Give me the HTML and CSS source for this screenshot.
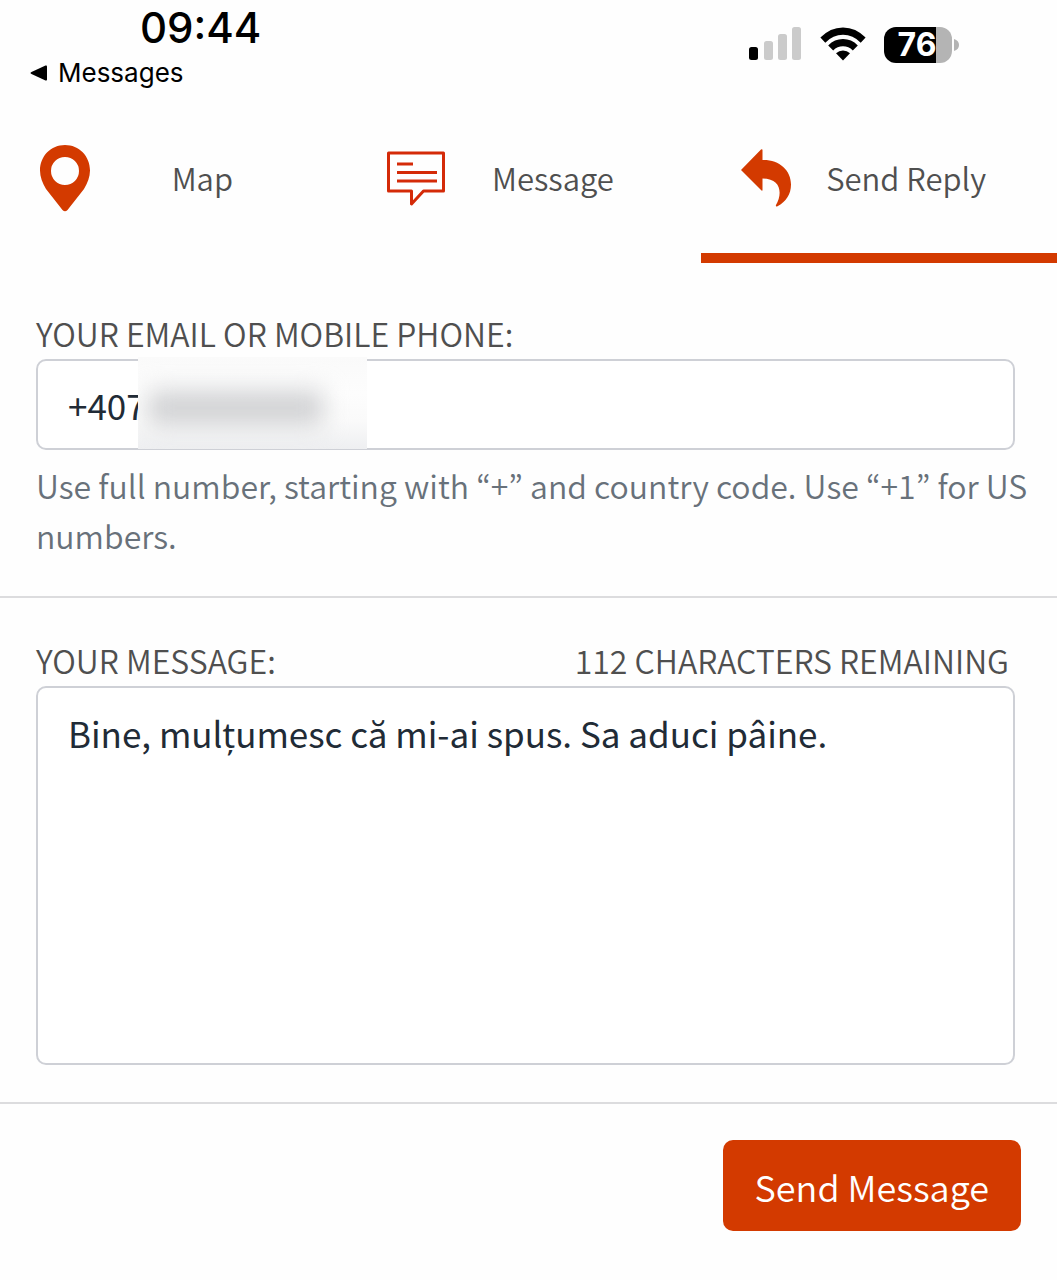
FILE: index.html
```html
<!DOCTYPE html>
<html lang="en">
<head>
  <meta charset="UTF-8" />
  <meta name="viewport" content="width=device-width, initial-scale=1.0" />
  <title>Send Reply</title>
  <link rel="stylesheet" href="styles.css">
</head>
<body>
  <header class="status-bar">
    <div class="status-left">
      <time class="clock">09:44</time>
      <a class="back-link" href="#">
        <svg width="18" height="16" viewBox="0 0 18 16" aria-hidden="true"><path d="M1.500 7 15.500.6Q17 0 17 1.500v13Q17 16 15.500 15.400L1.500 9Q-.5 8 1.500 7z" fill="#000"/></svg>
        Messages
      </a>
    </div>
    <div class="status-right">
      <svg width="53" height="34" viewBox="0 0 53 34" aria-label="Signal">
        <rect x="0" y="20" width="9" height="13" rx="2.500" fill="#000"/>
        <rect x="15" y="14" width="9" height="19" rx="2.500" fill="#cbcbcb"/>
        <rect x="29" y="7" width="9" height="26" rx="2.500" fill="#cbcbcb"/>
        <rect x="43" y="0" width="9" height="33" rx="2.500" fill="#cbcbcb"/>
      </svg>
      <svg width="46" height="34" viewBox="0 0 46 34" aria-label="Wi-Fi">
        <path d="M.4 10.600Q10 .4 23 .4t22.600 10.200L40.700 15.700Q33 7.800 23 7.800T5.300 15.700z"/>
        <path d="M8.200 18.400Q14.500 12 23 12t14.800 6.400L32.800 23.500Q28.700 19.300 23 19.300T13.200 23.500z"/>
        <path d="M16 26.300Q19 23.400 23 23.400t7 2.900L23 33.600z"/>
      </svg>
      <div class="battery">
        <span class="battery-level">76</span>
        <svg class="battery-tip" width="5" height="12" viewBox="0 0 5 12" aria-hidden="true"><path d="M0 0Q5 1.500 5 6T0 12z" fill="#b4b4b4"/></svg>
      </div>
    </div>
  </header>

  <nav class="tabs">
    <a class="tab" href="#map">
      <span class="tab-icon">
        <svg width="52" height="68" viewBox="0 0 52 68" aria-hidden="true">
          <path fill="#d33a00" fill-rule="evenodd" d="M26 1C12 1 1 12 1 26.500 1 33 3.500 39 7 45L23.500 66Q26 68.500 28.500 66L45 45C48.500 39 51 33 51 26.500 51 12 40 1 26 1zM26 13a14 14 0 1 1 0 28 14 14 0 1 1 0-28z"/>
        </svg>
      </span>
      <span class="tab-label">Map</span>
    </a>
    <a class="tab" href="#message">
      <span class="tab-icon">
        <svg width="58" height="56" viewBox="0 0 58 56" aria-hidden="true">
          <g fill="none" stroke="#d42a08" stroke-width="3">
            <path stroke-linejoin="round" d="M1.500 3H56.500V41H36.500L24.500 54V41H1.500z"/>
            <path d="M10 14H26M10 22.500H50M10 31H50"/>
          </g>
        </svg>
      </span>
      <span class="tab-label">Message</span>
    </a>
    <a class="tab active" href="#reply" aria-current="page">
      <span class="tab-icon">
        <svg width="52" height="58" viewBox="0 0 52 58" aria-hidden="true">
          <path fill="#d33a00" d="M1 21 21 .5Q22.500 0 22.500 1V11C39 10.500 51 21 51 35.500 51 45.500 46 52.500 37.500 57.300Q35.300 58 36 56C42.500 45 41.500 29.500 22.500 29.500V41Q22.500 42 21.500 41.500z"/>
        </svg>
      </span>
      <span class="tab-label">Send Reply</span>
    </a>
  </nav>

  <form class="reply-form">
    <section class="field">
      <label for="contact">YOUR EMAIL OR MOBILE PHONE:</label>
      <div class="input-wrap">
        <input type="text" id="contact" value="+407" />
        <span class="redacted"></span>
      </div>
      <p class="hint">Use full number, starting with “+” and country code. Use “+1” for US numbers.</p>
    </section>

    <section class="field message-field">
      <div class="label-row">
        <label for="message">YOUR MESSAGE:</label>
        <span>112 CHARACTERS REMAINING</span>
      </div>
      <textarea id="message">Bine, mulțumesc că mi-ai spus. Sa aduci pâine.</textarea>
    </section>

    <div class="actions">
      <button type="button">Send Message</button>
    </div>
  </form>
</body>
</html>
```

FILE: styles.css
```css
* {
  box-sizing: border-box;
}
body {
  margin: 0;
  background: #fefefe;
  color: #4f4f4f;
  font-family: "Noto Sans CJK KR", "Noto Sans", sans-serif;
  font-weight: 350;
}
a {
  color: inherit;
  text-decoration: none;
}

/* Status bar */
.status-bar {
  display: flex;
  justify-content: space-between;
  height: 110px;
  padding: 4px 98px 0 30px;
  color: #000;
  font-family: Inter, sans-serif;
}
.clock {
  display: block;
  padding-left: 110px;
  font-size: 42px;
  font-weight: 500;
  line-height: 48px;
}
.back-link {
  display: flex;
  align-items: center;
  gap: 10px;
  font-size: 26px;
  font-weight: 400;
  line-height: 42px;
}
.status-right {
  display: flex;
  align-items: flex-start;
  gap: 18px;
  padding-top: 23px;
}
.battery {
  display: flex;
  align-items: center;
  gap: 2px;
}
.battery-level {
  width: 68px;
  height: 36px;
  padding-right: 2px;
  border-radius: 12px;
  background: linear-gradient(to right, #000 52px, #b4b4b4 52px);
  color: #fff;
  font-size: 32px;
  font-weight: 700;
  line-height: 36px;
  text-align: center;
}

/* Tabs */
.tabs {
  display: grid;
  grid-template-columns: 70fr 70fr 71fr;
}
.tab {
  display: flex;
  align-items: center;
  height: 153px;
  padding: 0 40px 8px 36px;
  border-bottom: 10px solid transparent;
}
.tab.active {
  border-bottom-color: #d33a00;
}
.tab-icon {
  display: flex;
  justify-content: center;
  width: 58px;
}
.tab-label {
  flex: 1;
  font-size: 31px;
  line-height: 48px;
  text-align: center;
  white-space: nowrap;
}

/* Form */
.field {
  padding: 46px 0 36px 36px;
  border-bottom: 2px solid #dcdcde;
  font-size: 32px;
  line-height: 48px;
}
.field label {
  display: block;
}
.input-wrap {
  position: relative;
  margin: 2px 42px 0 0;
}
input,
textarea {
  display: block;
  width: 100%;
  padding: 0 30px;
  border: 2px solid #ced0d6;
  border-radius: 10px;
  background: #fff;
  color: #212b36;
  font: inherit;
  font-size: 35px;
  font-weight: 400;
  outline: none;
}
input {
  height: 91px;
}
textarea {
  height: 379px;
  margin-top: 2px;
  padding: 18px 30px;
  line-height: 54px;
  resize: none;
}
.redacted {
  position: absolute;
  top: -2px;
  left: 102px;
  width: 229px;
  height: 92px;
  overflow: hidden;
  background: linear-gradient(#fafafa, #fdfdfd 40%, #fafafa 70%, #eeeff1);
}
.redacted::before {
  content: "";
  position: absolute;
  inset: 34px 44px 24px 10px;
  background: #d0d1d3;
  filter: blur(12px);
}
.hint {
  margin: 10px 0 0;
  color: #68717a;
  line-height: 50px;
}
.message-field {
  padding: 38px 42px 37px 36px;
}
.label-row {
  display: flex;
  justify-content: space-between;
  padding-right: 6px;
}
.actions {
  display: flex;
  justify-content: flex-end;
  padding: 36px;
}
button {
  height: 91px;
  padding: 0 32px;
  border: none;
  border-radius: 10px;
  background: #d33a00;
  color: #fff;
  font: inherit;
  font-size: 36px;
  cursor: pointer;
}
```
